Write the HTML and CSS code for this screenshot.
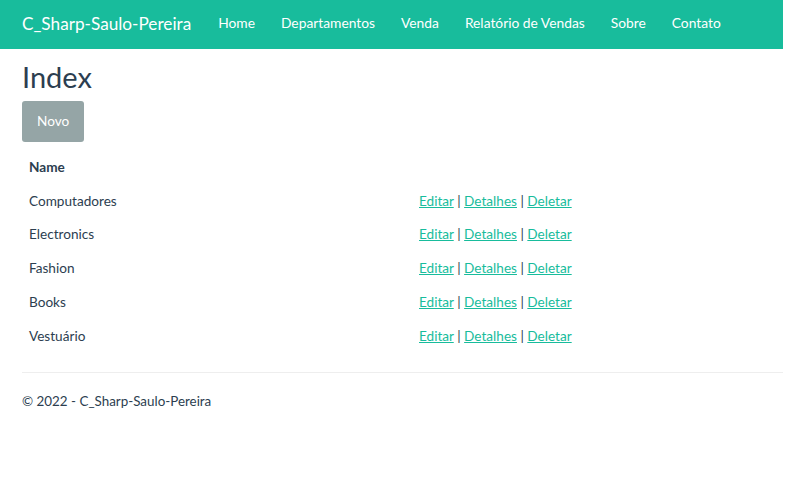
FILE: index.html
```html
<!DOCTYPE html>
<html lang="pt">
<head>
<meta charset="utf-8">
<title>Index - C_Sharp-Saulo-Pereira</title>
<link rel="stylesheet" href="styles.css">
</head>
<body>
<div class="page">
  <nav class="navbar">
    <a class="brand" href="#">C_Sharp-Saulo-Pereira</a>
    <ul class="nav">
      <li><a href="#">Home</a></li>
      <li><a href="#">Departamentos</a></li>
      <li><a href="#">Venda</a></li>
      <li><a href="#">Relatório de Vendas</a></li>
      <li><a href="#">Sobre</a></li>
      <li><a href="#">Contato</a></li>
    </ul>
  </nav>
  <main class="container">
    <h2 class="title">Index</h2>
    <p class="actions"><a class="btn" href="#">Novo</a></p>
    <table class="table">
      <thead>
        <tr><th>Name</th><th></th></tr>
      </thead>
      <tbody>
        <tr><td>Computadores</td><td><a href="#">Editar</a> | <a href="#">Detalhes</a> | <a href="#">Deletar</a></td></tr>
        <tr><td>Electronics</td><td><a href="#">Editar</a> | <a href="#">Detalhes</a> | <a href="#">Deletar</a></td></tr>
        <tr><td>Fashion</td><td><a href="#">Editar</a> | <a href="#">Detalhes</a> | <a href="#">Deletar</a></td></tr>
        <tr><td>Books</td><td><a href="#">Editar</a> | <a href="#">Detalhes</a> | <a href="#">Deletar</a></td></tr>
        <tr><td>Vestuário</td><td><a href="#">Editar</a> | <a href="#">Detalhes</a> | <a href="#">Deletar</a></td></tr>
      </tbody>
    </table>
    <hr class="rule">
    <footer class="footer">
      <p>&copy; 2022 - C_Sharp-Saulo-Pereira</p>
    </footer>
  </main>
</div>
</body>
</html>
```
FILE: styles.css
```css
* { box-sizing: border-box; }
html, body { margin: 0; padding: 0; background: #fff; }
body {
  font-family: Lato, "Open Sans", "Liberation Sans", sans-serif;
  font-size: 13.6px;
  line-height: 19.7px;
  color: #2c3e50;
}
.page { width: 783px; }
.navbar {
  background: #18bc9c;
  height: 49px;
  display: flex;
  align-items: center;
  padding: 0 22px;
}
.brand {
  color: #fff;
  text-decoration: none;
  font-size: 17.2px;
  margin-right: 14px;
  position: relative;
  top: -1px;
}
.nav {
  list-style: none;
  margin: 0;
  padding: 0;
  display: flex;
}
.nav a {
  display: block;
  color: #fff;
  text-decoration: none;
  font-size: 13.8px;
  padding: 0 13px;
  position: relative;
  top: -2px;
}
.container { padding: 0 0 0 22px; }
.title {
  margin: 12px 0 0;
  font-size: 29px;
  font-weight: 400;
  line-height: 32px;
}
.actions { margin: 8px 0 0; }
.btn {
  display: inline-block;
  background: #95a5a6;
  color: #fff;
  text-decoration: none;
  border-radius: 3px;
  padding: 11px 15px;
  line-height: 19px;
  font-size: 13.6px;
}
.table {
  border-collapse: collapse;
  width: 761px;
  margin-top: 10px;
}
.table th, .table td {
  text-align: left;
  padding: 7px 7px;
  height: 33.6px;
  vertical-align: middle;
}
.table th { font-weight: 700; height: auto; padding: 6px 7px 7px; }
.table td:first-child, .table th:first-child { width: 390px; }
.table a { color: #18bc9c; text-decoration: underline; }
.rule {
  border: 0;
  border-top: 1px solid #eee;
  margin: 19px 0 0;
}
.footer p { margin: 19px 0 0; font-size: 13.4px; }
```
